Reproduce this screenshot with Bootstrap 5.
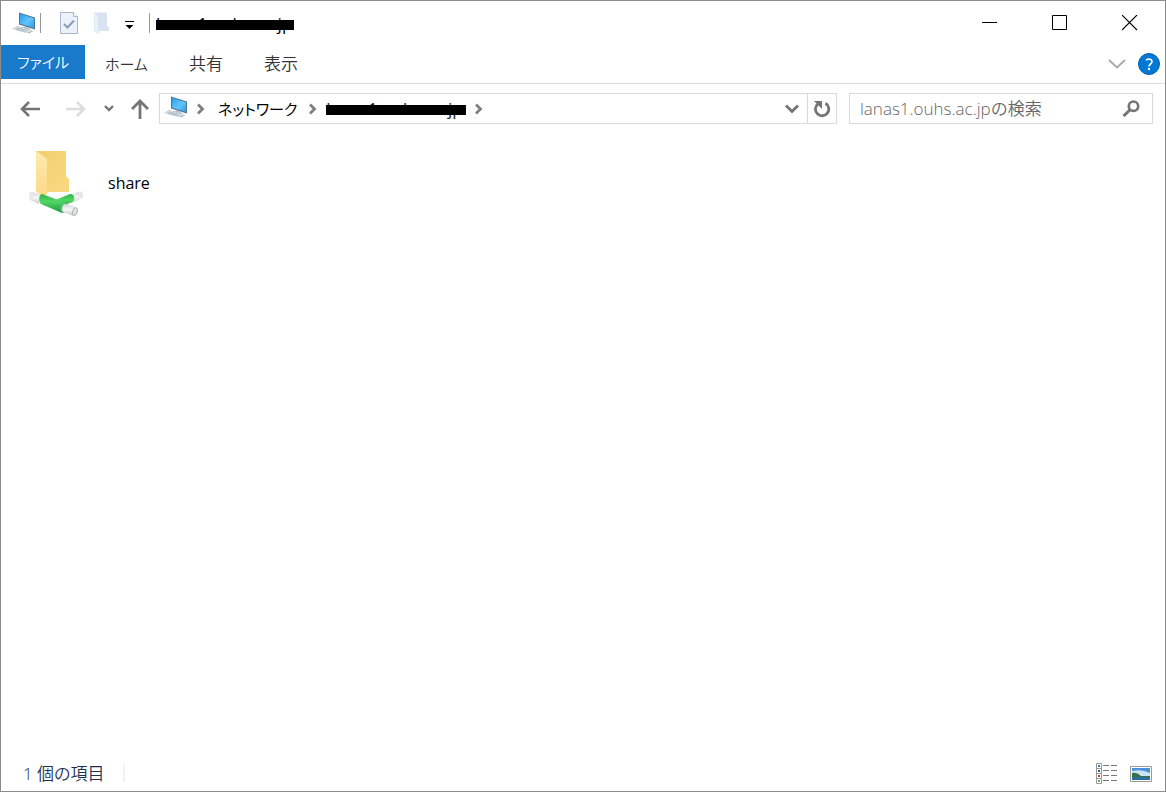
<!DOCTYPE html>
<html lang="ja">
<head>
<meta charset="utf-8">
<meta name="viewport" content="width=device-width, initial-scale=1">
<title>lanas1.ouhs.ac.jp</title>
<link rel="stylesheet" href="https://cdn.jsdelivr.net/npm/bootstrap@5.3.0/dist/css/bootstrap.min.css">
<style>
body { font-family: "Open Sans", "Noto Sans CJK JP", sans-serif; font-size: 17px; line-height: 24px; color: #000; background: #fff; font-feature-settings: "palt"; }
svg { display: block; flex: none; }
.window { border: 1px solid #8c8c8c; }
.plain { border: 0; padding: 0; background: transparent; color: inherit; display: inline-flex; align-items: center; justify-content: center; flex: none; }
.titlebar { height: 44px; padding-left: 11px; }
.rule { width: 1px; height: 20px; background: #999; flex: none; }
.caption-btn { width: 70px; height: 44px; }
.qa { width: 32px; height: 32px; }
.redacted { position: relative; font-size: 17px; font-weight: 400; line-height: 24px; white-space: nowrap; }
.redacted::after { content: ""; position: absolute; left: 0; right: 0; top: 8px; height: 10px; background: #000; }
.title-name { width: 138px; margin: 2px 0 0 6px; }
.crumb-host { width: 140px; color: #222; text-decoration: none; }
.ribbon { height: 39px; border-bottom: 1px solid #dadbdc; font-weight: 350; }
.ribbon a { color: #333; text-decoration: none; height: 34px; line-height: 38px; }
.ribbon .file { background: #1979ca; color: #fff; width: 84px; text-align: center; line-height: 34px; }
.kana { font-size: 15px; }
.tab { margin-left: 20px; }
.tab + .tab { margin-left: 41px; }
.tools { gap: 12px; padding-right: 5px; }
.navrow { padding: 9px 12px 0 11px; }
.arrow { width: 20px; margin-left: 8px; }
.arrow + .arrow { margin-left: 26px; }
.recent { width: 10px; margin-left: 18px; }
.upbtn { width: 18px; margin: 0 10px 0 17px; }
.addr, .search { height: 31px; border: 1px solid #d9d9d9; }
.crumb { color: #000; text-decoration: none; margin: 0 11px 0 12px; }
.refresh { width: 29px; border-left: 1px solid #d9d9d9; }
.search { width: 304px; margin-left: 12px; }
.search input { border: 0; outline: 0; background: transparent; padding: 0 0 0 10px; min-width: 0; font-weight: 350; }
.search input::placeholder { color: #666; opacity: 1; }
.files { padding: 25px 26px; }
.share-name { font-size: 16px; margin-left: 21px; }
.status { height: 35px; padding: 0 13px 0 22px; color: #1e3150; font-weight: 350; }
.status-rule { width: 2px; height: 17px; background: #f1f1f1; margin-left: 18px; }
.views { gap: 12px; }
</style>
</head>
<body>
<svg width="0" height="0" class="position-absolute" aria-hidden="true">
  <defs>
    <linearGradient id="scr" x1="0" y1="0" x2="1" y2="1"><stop offset="0" stop-color="#2a9fee"/><stop offset=".55" stop-color="#62c4fb"/><stop offset="1" stop-color="#2b9cea"/></linearGradient>
    <symbol id="pc" viewBox="0 0 24 22">
      <path d="M8 15.500l6-1 5 3-5 2z" fill="#b4bcc4"/>
      <path d="M7 .5 23 5.500v12L7 12.500z" fill="#4f7391"/>
      <path d="M8 1.800 22 6.200v9.800L8 11.700z" fill="url(#scr)"/>
      <path d="M0 17 5 14l14 3.500-5 3.500z" fill="#c6d0d9"/>
      <path d="M2 17l4-2 9 2.500-4 2z" fill="#e9eef3"/>
      <path d="M3.500 17.200l9 2M5 16l9 2.200M7 15.500l-3 2M10 16.200l-3 2M13 17l-3 2" stroke="#94a2af" stroke-width=".6"/>
      <path d="M15 20.500l5-2 1.500.5-4.500 2.500z" fill="#a9b8c5"/>
    </symbol>
    <symbol id="chev" viewBox="0 0 10 12"><path d="M2 1.500 6.500 6 2 10.500" fill="none" stroke="#808080" stroke-width="2.800"/></symbol>
  </defs>
</svg>
<div class="window d-flex flex-column min-vh-100">
  <header class="titlebar d-flex align-items-center">
    <svg width="24" height="22"><use href="#pc"/></svg>
    <span class="rule ms-1 me-2"></span>
    <button class="plain qa ps-2" aria-label="プロパティ"><svg width="18" height="22" viewBox="0 0 18 22"><path d="M.5.500h13l4 4v17H.5z" fill="#ecf1fa" stroke="#a9b6cd"/><path d="M13.500.500v4h4" fill="#fff" stroke="#a9b6cd"/><path d="M4 12l3.500 3.500L14 8.500" fill="none" stroke="#8b9cb8" stroke-width="2"/></svg></button>
    <button class="plain qa ps-2" aria-label="新しいフォルダー"><svg width="15" height="22" viewBox="0 0 15 22"><path d="M1 .500h12v14h2v4.500H4V4z" fill="#d8e2f0"/><path d="M0 .500 4.500 4v17.500L0 19z" fill="#e9f0fa" stroke="#cfdaea" stroke-width=".5"/></svg></button>
    <button class="plain qa pt-1" aria-label="クイック アクセスのカスタマイズ"><svg width="10" height="10" viewBox="0 0 10 10"><path d="M1 1.500h9" stroke="#000"/><path d="M1.500 5h8L5.500 9z"/></svg></button>
    <span class="rule ms-1"></span>
    <h1 class="redacted title-name">lanas1.ouhs.ac.jp</h1>
    <div class="d-flex ms-auto">
      <button class="plain caption-btn" aria-label="最小化"><svg width="16" height="16" viewBox="0 0 16 16"><path d="M0 7.500h15" stroke="#000"/></svg></button>
      <button class="plain caption-btn" aria-label="最大化"><svg width="16" height="16" viewBox="0 0 16 16"><path d="M.5.500h14v14H.5z" fill="none" stroke="#000"/></svg></button>
      <button class="plain caption-btn" aria-label="閉じる"><svg width="16" height="16" viewBox="0 0 16 16"><path d="M0 0l15 15M15 0 0 15" stroke="#000" stroke-width="1.100"/></svg></button>
    </div>
  </header>
  <nav class="ribbon d-flex">
    <a class="file kana" href="#">ファイル</a>
    <a class="tab kana" href="#">ホーム</a>
    <a class="tab" href="#">共有</a>
    <a class="tab" href="#">表示</a>
    <div class="d-flex align-items-center ms-auto tools">
      <button class="plain" aria-label="リボンの展開"><svg width="18" height="10" viewBox="0 0 18 10"><path d="M1 1l8 7.500L17 1" fill="none" stroke="#a8a8a8" stroke-width="1.800"/></svg></button>
      <button class="plain" aria-label="ヘルプ"><svg width="22" height="22" viewBox="0 0 22 22"><circle cx="11" cy="11" r="10.500" fill="#0078d7" stroke="#0a5ea8"/><path d="M8 7.200c2-1.600 6-1.300 6 1.300 0 2.500-3 2.500-3 5" fill="none" stroke="#fff" stroke-width="1.700"/><circle cx="11" cy="16" r="1.200" fill="#fff"/></svg></button>
    </div>
  </nav>
  <div class="navrow d-flex align-items-center">
    <button class="plain arrow" aria-label="戻る"><svg width="20" height="16" viewBox="0 0 20 16"><path d="M20 8H2M9 1 2 8l7 7" fill="none" stroke="#757575" stroke-width="2.600"/></svg></button>
    <button class="plain arrow" aria-label="進む" disabled><svg width="20" height="16" viewBox="0 0 20 16"><path d="M0 8h18M11 1l7 7-7 7" fill="none" stroke="#dcdcdc" stroke-width="2.600"/></svg></button>
    <button class="plain recent" aria-label="最近表示した場所"><svg width="10" height="7" viewBox="0 0 10 7"><path d="M1 1l4 4 4-4" fill="none" stroke="#757575" stroke-width="2.400"/></svg></button>
    <button class="plain upbtn" aria-label="上へ"><svg width="18" height="20" viewBox="0 0 18 20"><path d="M9 20V2M1 10l8-8 8 8" fill="none" stroke="#757575" stroke-width="2.800"/></svg></button>
    <div class="addr d-flex align-items-center flex-grow-1">
      <svg class="ms-1 mb-1" width="24" height="22"><use href="#pc"/></svg>
      <svg class="ms-2" width="10" height="12"><use href="#chev"/></svg>
      <a class="crumb kana" href="#">ネットワーク</a>
      <svg width="10" height="12"><use href="#chev"/></svg>
      <a class="redacted crumb-host ms-2" href="#">lanas1.ouhs.ac.jp</a>
      <svg class="ms-2" width="10" height="12"><use href="#chev"/></svg>
      <button class="plain ms-auto px-1 me-1" aria-label="以前の場所"><svg width="14" height="10" viewBox="0 0 14 10"><path d="M1 1.500l6 6 6-6" fill="none" stroke="#757575" stroke-width="2.800"/></svg></button>
      <button class="plain refresh h-100" aria-label="最新の情報に更新"><svg width="18" height="18" viewBox="0 0 18 18"><path d="M12.500 3.300a6.700 6.700 0 1 1-7.500.500" fill="none" stroke="#757575" stroke-width="2.800"/><path d="M1 1h8v8z" fill="#757575"/></svg></button>
    </div>
    <div class="search d-flex align-items-center">
      <input class="flex-grow-1" type="text" aria-label="検索" placeholder="lanas1.ouhs.ac.jpの検索">
      <button class="plain px-2 me-1" aria-label="検索を実行"><svg width="18" height="17" viewBox="0 0 18 17"><circle cx="11.500" cy="6.200" r="4.700" fill="none" stroke="#757575" stroke-width="2.700"/><path d="M8 9.800 1.500 16" stroke="#757575" stroke-width="3"/></svg></button>
    </div>
  </div>
  <main class="files flex-grow-1">
    <a href="#" class="d-inline-flex align-items-center text-black text-decoration-none">
      <svg width="60" height="68" viewBox="2 -1 60 68">
        <defs>
          <linearGradient id="fb" x1="0" y1="0" x2="1" y2="1"><stop offset="0" stop-color="#f2cf72"/><stop offset="1" stop-color="#f9d980"/></linearGradient>
          <linearGradient id="ff" x1="0" y1="0" x2="0" y2="1"><stop offset="0" stop-color="#ffeab0"/><stop offset="1" stop-color="#fbd987"/></linearGradient>
          <linearGradient id="gr" x1="0" y1="0" x2="0" y2="1"><stop offset="0" stop-color="#2db549"/><stop offset=".4" stop-color="#52d765"/><stop offset="1" stop-color="#16963b"/></linearGradient>
          <linearGradient id="tb" x1="0" y1="0" x2="0" y2="1"><stop offset="0" stop-color="#d0d2d4"/><stop offset=".45" stop-color="#f7f7f7"/><stop offset="1" stop-color="#c5c8ca"/></linearGradient>
        </defs>
        <path d="M11 1h30v25l3 3v13H21z" fill="url(#fb)"/>
        <path d="M11 1l11 8v36l-4 1-7-4z" fill="url(#ff)"/>
        <path d="M8 48l9 4 20 8 12-6-4 7-14 0z" fill="#ededed" opacity=".5"/>
        <path d="M43 45.500l12-4c3 0 4 5 2 7l-12 5z" fill="url(#tb)"/>
        <ellipse cx="55.500" cy="45" rx="2" ry="3.400" fill="#e6e7e8" transform="rotate(-15 55.500 45)"/>
        <path d="M28 51l17-7c4-1 6 6 2 8l-16 7z" fill="url(#gr)"/>
        <path d="M7 42l9 3-2 9-9-4c-2-3-1-8 2-8z" fill="url(#tb)"/>
        <ellipse cx="6.500" cy="46" rx="2.200" ry="3.800" fill="#e8e9ea" transform="rotate(15 6.500 46)"/>
        <path d="M17 44l24 9c2 3-1 9-4 10l-21-9c-3-3-2-10 1-10z" fill="url(#gr)"/>
        <ellipse cx="39" cy="58" rx="3.500" ry="5" fill="#65b78c" transform="rotate(18 39 58)"/>
        <path d="M40 54l11 3c3 2 0 9-3 9l-10-4c-2-3 0-8 2-8z" fill="url(#tb)"/>
        <ellipse cx="50" cy="61.500" rx="2.300" ry="3.800" fill="#e1e2e3" stroke="#b4b6b8" transform="rotate(18 50 61.500)"/>
      </svg>
      <span class="share-name">share</span>
    </a>
  </main>
  <footer class="status d-flex align-items-center">
    <span>1 個の項目</span><span class="status-rule"></span>
    <div class="d-flex align-items-center ms-auto views">
      <button class="plain" aria-label="詳細"><svg width="22" height="22" viewBox="0 0 22 22"><path d="M.5.500h5v20h-5zM.5 5.500h5M.5 10.500h5M.5 15.500h5" fill="#fff" stroke="#999"/><path d="M2 2h2v2H2z" fill="#347ec0"/><path d="M2 7h2v2H2z" fill="#315f87"/><path d="M2 12h2v2H2z" fill="#c0392b"/><path d="M2 17h2v2H2z" fill="#7cab4a"/><path d="M7 2.500h6m2 0h6M7 7.500h6m2 0h6M7 12.500h6m2 0h6M7 17.500h6m2 0h6" stroke="#777"/></svg></button>
      <button class="plain" aria-label="大アイコン"><svg width="22" height="16" viewBox="0 0 22 16"><path d="M.5.500h21v15H.5z" fill="#fff" stroke="#999"/><path d="M2 2h18v12H2z" fill="#4a90dc"/><path d="M2 5q10-2 18 2v3H2z" fill="#c9e2f5"/><path d="M2 7q5-1 9 3h9v1H2z" fill="#397043"/><path d="M2 11h18v3H2z" fill="#2b6d9c"/></svg></button>
    </div>
  </footer>
</div>
<script src="https://cdn.jsdelivr.net/npm/bootstrap@5.3.0/dist/js/bootstrap.bundle.min.js"></script>
</body>
</html>
